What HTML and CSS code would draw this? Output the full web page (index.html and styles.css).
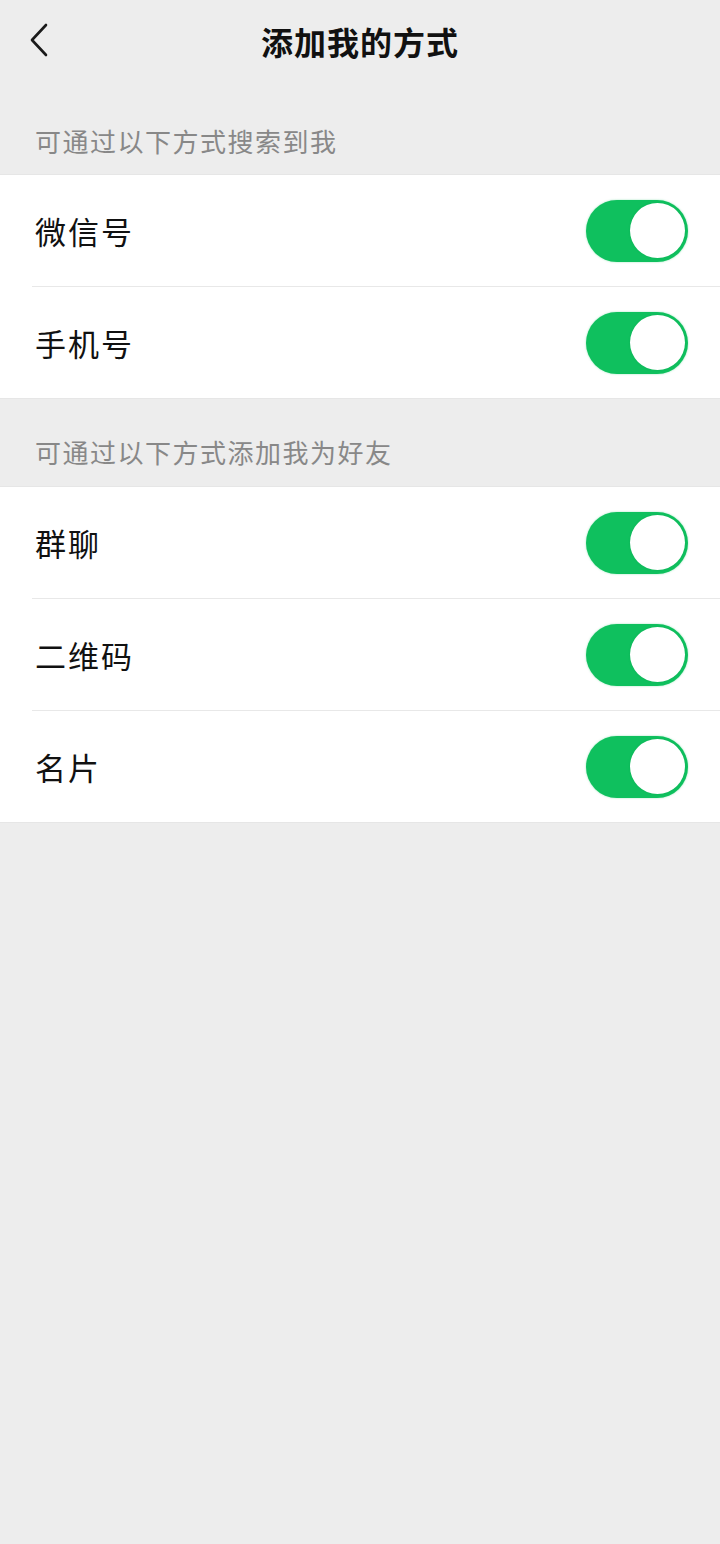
FILE: index.html
```html
<!DOCTYPE html>
<html lang="zh-CN">
<head>
    <meta charset="UTF-8">
    <title>添加我的方式</title>
    <link rel="stylesheet" href="styles.css">
</head>
<body>
    <div class="nav">
        <svg class="back" width="22" height="36" viewBox="0 0 22 36">
            <polyline points="18,3 4,18 18,33" fill="none" stroke="#1a1a1a" stroke-width="2.6" stroke-linecap="round" stroke-linejoin="round"/>
        </svg>
        <h1>添加我的方式</h1>
    </div>

    <div class="section-title">可通过以下方式搜索到我</div>
    <div class="group">
        <div class="row">
            <span class="label">微信号</span>
            <span class="switch on"><span class="knob"></span></span>
        </div>
        <div class="row">
            <span class="label">手机号</span>
            <span class="switch on"><span class="knob"></span></span>
        </div>
    </div>

    <div class="section-title">可通过以下方式添加我为好友</div>
    <div class="group">
        <div class="row">
            <span class="label">群聊</span>
            <span class="switch on"><span class="knob"></span></span>
        </div>
        <div class="row">
            <span class="label">二维码</span>
            <span class="switch on"><span class="knob"></span></span>
        </div>
        <div class="row">
            <span class="label">名片</span>
            <span class="switch on"><span class="knob"></span></span>
        </div>
    </div>
</body>
</html>
```

FILE: styles.css
```css
body {
    margin: 0;
    background: #ededed;
    font-family: "Noto Sans CJK SC", "Noto Sans", sans-serif;
    color: #111;
}

.nav {
    height: 86px;
    display: flex;
    align-items: center;
    justify-content: center;
    position: relative;
}
.nav h1 {
    margin: 0;
    font-size: 32px;
    font-weight: bold;
    letter-spacing: 1px;
    line-height: 1;
    margin-top: -4px;
}
.back {
    position: absolute;
    left: 28px;
    top: 22px;
}

.section-title {
    height: 88px;
    box-sizing: border-box;
    padding: 40px 0 0 35px;
    font-size: 26px;
    line-height: 30px;
    letter-spacing: 1.5px;
    color: #888;
}
.group + .section-title {
    height: 87px;
    padding-top: 38px;
}

.group {
    background: #fff;
    border-top: 1px solid #e6e6e6;
    border-bottom: 1px solid #e6e6e6;
}
.row {
    height: 111px;
    margin-left: 32px;
    padding-right: 32px;
    display: flex;
    align-items: center;
    justify-content: space-between;
    border-top: 1px solid #e8e8e8;
}
.row:first-child { border-top: none; }
.label {
    font-size: 31px;
    letter-spacing: 2px;
    padding-left: 3px;
}

.switch {
    width: 102px;
    height: 62px;
    border-radius: 31px;
    background: #e5e5e5;
    display: flex;
    align-items: center;
    padding: 0 3px;
    box-sizing: border-box;
    box-shadow: 0 0 2px rgba(40, 200, 110, 0.5);
}
.switch.on {
    background: #0fc05e;
    justify-content: flex-end;
}
.knob {
    width: 55px;
    height: 55px;
    border-radius: 50%;
    background: #fff;
    box-shadow: 0 0 2px rgba(0, 150, 70, 0.4);
}
```
